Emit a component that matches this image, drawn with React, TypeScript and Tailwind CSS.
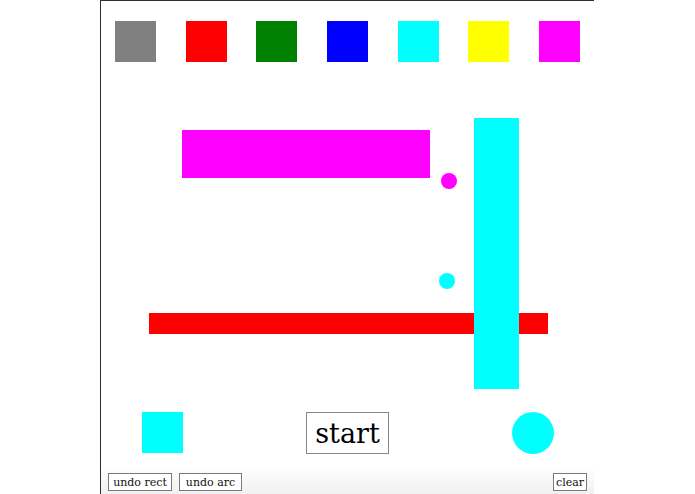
const swatches = ["#808080", "#ff0000", "#008000", "#0000ff", "#00ffff", "#ffff00", "#ff00ff"]

const serif = "font-['DejaVu_Serif','Liberation_Serif',serif]"

function SmallButton({ label, className = "" }: { label: string; className?: string }) {
  return (
    <button
      className={`flex h-[18px] items-center justify-center border border-[#7a7a7a] bg-white p-0 text-[11px] leading-none text-[#111] ${serif} ${className}`}
    >
      {label}
    </button>
  )
}

export default function App() {
  return (
    <div className="flex h-[494px] w-[695px] overflow-hidden bg-white">
      <div className="w-[100px] shrink-0" />
      <div className="flex h-[494px] w-[494px] flex-col border-l border-t border-[#2e2e2e]">
        {/* colour picker */}
        <div className="flex h-[82px] gap-[29.7px] pl-[14px] pt-[20px]">
          {swatches.map((c) => (
            <div key={c} className="h-[41px] w-[41px]" style={{ backgroundColor: c }} />
          ))}
        </div>

        {/* drawing canvas */}
        <div className="relative h-[317px]">
          <div className="absolute left-[81px] top-[47px] h-[48px] w-[248px] bg-[#ff00ff]" />
          <div className="absolute left-[340px] top-[90px] h-[16px] w-[16px] rounded-full bg-[#ff00ff]" />
          <div className="absolute left-[338px] top-[190px] h-[16px] w-[16px] rounded-full bg-[#00ffff]" />
          <div className="absolute left-[48px] top-[230px] h-[21px] w-[399px] bg-[#ff0000]" />
          <div className="absolute left-[373px] top-[35px] h-[271px] w-[45px] bg-[#00ffff]" />
        </div>

        {/* shape tools */}
        <div className="flex h-[66px] items-start pt-[12px]">
          <div className="ml-[41px] h-[41px] w-[41px] bg-[#00ffff]" />
          <button
            className={`ml-[123px] h-[42px] w-[83px] border border-[#888] bg-white text-[27px] leading-none text-black ${serif}`}
          >
            start
          </button>
          <div className="ml-[123px] h-[42px] w-[42px] rounded-full bg-[#00ffff]" />
        </div>

        <div className="flex flex-1 items-start bg-gradient-to-b from-white to-[#f1f1f1] pl-[7px] pr-[7px] pt-[7px]">
          <SmallButton label="undo rect" className="w-[64px]" />
          <SmallButton label="undo arc" className="ml-[7px] w-[63px]" />
          <SmallButton label="clear" className="ml-auto w-[34px]" />
        </div>
      </div>
    </div>
  )
}
